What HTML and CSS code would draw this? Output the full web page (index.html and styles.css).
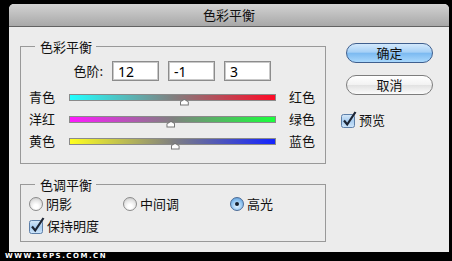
FILE: index.html
```html
<!DOCTYPE html>
<html lang="zh-CN">
<head>
    <meta charset="UTF-8">
    <title>色彩平衡</title>
    <link rel="stylesheet" href="styles.css">
</head>
<body>
    <div class="window">
        <div class="titlebar">色彩平衡</div>
        <div class="dialog">
            <div class="main">
                <div class="group balance">
                    <div class="group-title">色彩平衡</div>
                    <div class="levels">
                        <span class="levels-label">色阶:</span>
                        <input class="level" type="text" value="12">
                        <input class="level" type="text" value="-1">
                        <input class="level" type="text" value="3">
                    </div>
                    <div class="slider-row">
                        <span class="side-left">青色</span>
                        <div class="track cyan-red"><span class="thumb" style="left: 56%"></span></div>
                        <span class="side-right">红色</span>
                    </div>
                    <div class="slider-row">
                        <span class="side-left">洋红</span>
                        <div class="track magenta-green"><span class="thumb" style="left: 49.5%"></span></div>
                        <span class="side-right">绿色</span>
                    </div>
                    <div class="slider-row">
                        <span class="side-left">黄色</span>
                        <div class="track yellow-blue"><span class="thumb" style="left: 51.5%"></span></div>
                        <span class="side-right">蓝色</span>
                    </div>
                </div>
                <div class="group tone">
                    <div class="group-title">色调平衡</div>
                    <div class="tones">
                        <label class="radio"><span class="dot"></span>阴影</label>
                        <label class="radio"><span class="dot"></span>中间调</label>
                        <label class="radio"><span class="dot on"></span>高光</label>
                    </div>
                    <label class="check">
                        <svg class="box" width="16" height="17" viewBox="0 0 16 17">
                            <defs>
                                <linearGradient id="cb1" x1="0" y1="0" x2="0" y2="1">
                                    <stop offset="0" stop-color="#d6e8f8"/>
                                    <stop offset="0.5" stop-color="#a9cdf0"/>
                                    <stop offset="1" stop-color="#cfe6fb"/>
                                </linearGradient>
                            </defs>
                            <rect x="0.5" y="3.5" width="13" height="13" rx="2" fill="url(#cb1)" stroke="#5d7fa8"/>
                            <path d="M3 9.5 L6.2 13.5 L14.5 1" fill="none" stroke="#1c2433" stroke-width="2.2"/>
                        </svg>
                        保持明度
                    </label>
                </div>
            </div>
            <div class="side">
                <button class="btn primary">确定</button>
                <button class="btn">取消</button>
                <label class="check preview">
                    <svg class="box" width="16" height="17" viewBox="0 0 16 17">
                        <defs>
                            <linearGradient id="cb2" x1="0" y1="0" x2="0" y2="1">
                                <stop offset="0" stop-color="#d6e8f8"/>
                                <stop offset="0.5" stop-color="#a9cdf0"/>
                                <stop offset="1" stop-color="#cfe6fb"/>
                            </linearGradient>
                        </defs>
                        <rect x="0.5" y="3.5" width="13" height="13" rx="2" fill="url(#cb2)" stroke="#5d7fa8"/>
                        <path d="M3 9.5 L6.2 13.5 L14.5 1" fill="none" stroke="#1c2433" stroke-width="2.2"/>
                    </svg>
                    预览
                </label>
            </div>
        </div>
    </div>
    <div class="watermark">WWW.16PS.COM.CN</div>
</body>
</html>
```

FILE: styles.css
```css
body {
    margin: 0;
    background: #000;
    font-family: "Noto Sans CJK SC", "Noto Sans", sans-serif;
    font-size: 13px;
    color: #111;
}
.window {
    margin: 4px 0 0 9px;
    width: 440px;
    height: 248px;
    background: #ececec;
    border-radius: 5px 5px 0 0;
    overflow: hidden;
}
.titlebar {
    height: 22px;
    line-height: 22px;
    text-align: center;
    background: linear-gradient(#d2d2d2, #a8a8a8);
    border-bottom: 1px solid #626262;
}
.dialog { display: flex; }
.main { width: 306px; margin-left: 11px; padding-top: 19px; }
.group { border: 1px solid #999; }
.group-title {
    margin: -9px 0 0 14px;
    padding: 0 4px 0 5px;
    width: fit-content;
    line-height: 17px;
    background: #ececec;
}
.balance { padding: 0 0 11px 0; }
.levels { display: flex; gap: 9px; margin-top: 6px; height: 20px; }
.levels-label { width: 82px; text-align: right; line-height: 20px; }
.level {
    width: 47px;
    height: 20px;
    box-sizing: border-box;
    margin: 0;
    padding: 0 0 0 5px;
    border: 1px solid #8c8c8c;
    box-shadow: inset 0 0 0 1px #c9c9c9;
    background: #fff;
    font-family: "Noto Sans", sans-serif;
    font-size: 14px;
    color: #000;
    outline: none;
}
.slider-row { display: flex; align-items: center; height: 22px; padding-left: 8px; }
.levels + .slider-row { margin-top: 5px; }
.side-left { width: 40px; line-height: 16px; }
.side-right { margin-left: 13px; line-height: 16px; }
.track {
    position: relative;
    width: 207px;
    height: 7px;
    box-sizing: border-box;
    border: 1px solid #8a8a8a;
}
.cyan-red { background: linear-gradient(to right, #22ffff, #808080 50%, #ff0a26); }
.magenta-green { background: linear-gradient(to right, #ff1aff, #808080 50%, #1aff3c); }
.yellow-blue { background: linear-gradient(to right, #ffff1f, #808080 50%, #1424ff); }
.thumb {
    position: absolute;
    top: 4px;
    width: 9px;
    height: 7px;
    margin-left: -5px;
    background: #777;
    clip-path: polygon(50% 0, 100% 45%, 100% 100%, 0 100%, 0 45%);
}
.thumb::after {
    content: "";
    position: absolute;
    left: 1px;
    top: 1.5px;
    width: 7px;
    height: 4.5px;
    background: #fff;
    clip-path: polygon(50% 0, 100% 45%, 100% 100%, 0 100%, 0 45%);
}
.tone { margin-top: 20px; padding: 0 0 7px 0; }
.tones {
    display: grid;
    grid-template-columns: 94px 107px auto;
    margin: 3px 0 0 8px;
    height: 16px;
}
.radio { display: flex; align-items: center; gap: 3px; line-height: 16px; }
.dot {
    width: 14px;
    height: 14px;
    box-sizing: border-box;
    border-radius: 50%;
    border: 1px solid #8b8b8b;
    background: radial-gradient(circle at 50% 70%, #ffffff 20%, #e4e4e4 60%, #bdbdbd);
}
.dot.on {
    position: relative;
    border-color: #4b6a96;
    background: radial-gradient(circle at 50% 65%, #d7ecfd 10%, #8dc2ef 55%, #4d8fd0);
}
.dot.on::after {
    content: "";
    position: absolute;
    left: 4px;
    top: 4px;
    width: 4px;
    height: 4px;
    border-radius: 50%;
    background: #15202e;
}
.check { display: flex; align-items: flex-end; gap: 2px; height: 17px; line-height: 16px; }
.tone .check { margin: 5px 0 0 8px; }
.side { display: flex; flex-direction: column; margin-left: 15px; padding-top: 16px; }
.btn {
    width: 87px;
    height: 20px;
    margin: 0 0 0 5px;
    padding: 0;
    border: 1px solid #7d7d7d;
    border-radius: 10px;
    background: linear-gradient(#ffffff, #f2f2f2 48%, #e2e2e2 52%, #fbfbfb);
    font-family: "Noto Sans CJK SC", sans-serif;
    font-size: 13px;
    line-height: 18px;
    color: #111;
}
.btn + .btn { margin-top: 12px; }
.primary {
    border-color: #3f5f8e;
    background: linear-gradient(#d3e9fc, #a6d0f6 45%, #7cbaf1 52%, #a9d8fc);
}
.preview { margin-top: 16px; }
.watermark {
    margin: 1px 0 0 5px;
    font-family: "DejaVu Sans", sans-serif;
    font-weight: bold;
    font-size: 7px;
    line-height: 7px;
    letter-spacing: 1.5px;
    color: #fff;
}
```
